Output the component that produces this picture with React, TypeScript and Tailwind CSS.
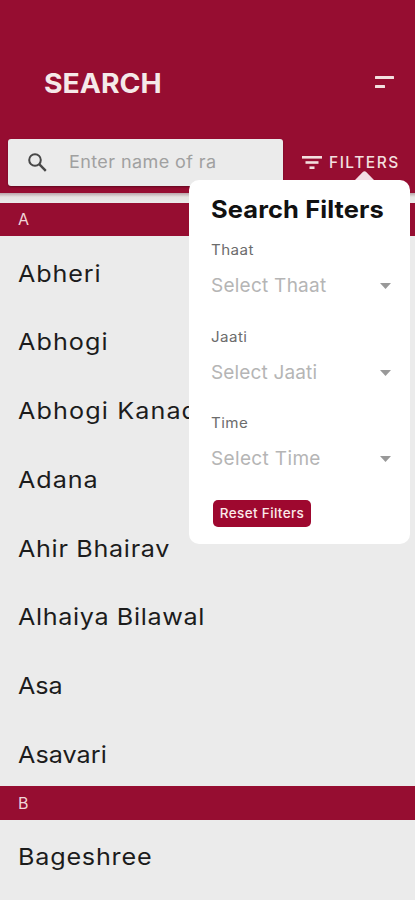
const sections = [
  {
    letter: 'A',
    ragas: [
      { name: 'Abheri', tracking: 'tracking-[0.8px]' },
      { name: 'Abhogi', tracking: 'tracking-[1px]' },
      { name: 'Abhogi Kanada', tracking: 'tracking-[1.05px]' },
      { name: 'Adana', tracking: 'tracking-[0.9px]' },
      { name: 'Ahir Bhairav', tracking: 'tracking-[0.65px]' },
      { name: 'Alhaiya Bilawal', tracking: 'tracking-[0.6px]' },
      { name: 'Asa', tracking: 'tracking-[-0.1px]' },
      { name: 'Asavari', tracking: 'tracking-[0.05px]' },
    ],
  },
  { letter: 'B', ragas: [{ name: 'Bageshree', tracking: 'tracking-[0.75px]' }] },
]

const filters = [
  { label: 'Thaat', placeholder: 'Select Thaat', tracking: 'tracking-[0.25px]' },
  { label: 'Jaati', placeholder: 'Select Jaati', tracking: 'tracking-[0.15px]' },
  { label: 'Time', placeholder: 'Select Time', tracking: 'tracking-[0.35px]' },
]

function Header() {
  return (
    <header className="h-[193px] bg-[#960d31]">
      <div className="flex h-[139px] items-start justify-between pl-[44px] pr-[21px] pt-[66px]">
        <h1 className="origin-left scale-x-[1.05] pt-px text-[27px] leading-[34px] font-bold tracking-[0px] text-[#f5e9e9]">SEARCH</h1>
        <svg className="mt-[10px]" width="19" height="13" viewBox="0 0 19 13" fill="#f3dfdf">
          <rect width="19" height="3" rx="0.5" />
          <rect y="9" width="10" height="3" rx="0.5" />
        </svg>
      </div>
      <div className="flex pl-[8px]">
        <div className="flex h-[47px] w-[275px] items-center rounded-[3px] bg-[#ebebeb] pl-[20px] shadow-[0_1px_2px_rgba(0,0,0,0.35)]">
          <svg width="19" height="19" viewBox="0 0 19 19" fill="none" stroke="#484848" strokeWidth="2">
            <circle cx="7" cy="7" r="5.8" />
            <path d="M11.2 11.2L17.8 17.8" strokeWidth="2.4" />
          </svg>
          <span className="ml-[22px] origin-left scale-x-[1.06] text-[17px] tracking-[0.37px] text-[#a0a0a0]">Enter name of ra</span>
        </div>
        <button className="flex h-[47px] items-center gap-[7px] pl-[19px] text-[15.5px] font-medium tracking-[1.5px] text-[#f3dfdf]">
          <svg width="20" height="13" viewBox="0 0 20 13" fill="#f3dfdf">
            <rect width="20" height="2.6" />
            <rect x="3.5" y="5.2" width="13" height="2.6" />
            <rect x="7.5" y="10.4" width="5" height="2.6" />
          </svg>
          FILTERS
        </button>
      </div>
    </header>
  )
}

function FilterPopup() {
  return (
    <div className="absolute left-[189px] top-[180px] h-[364px] w-[221px] rounded-[10px] bg-white pl-[22px]">
      <svg className="absolute left-[166px] top-[-9px]" width="19" height="9" viewBox="0 0 19 9">
        <path d="M0 9L7.8 1Q9.5 -0.5 11.2 1L19 9Z" fill="#f3dce4" />
      </svg>
      <h2 className="origin-left scale-x-[1.06] pt-[15px] text-[24px] leading-[30px] font-bold tracking-[0.1px] text-[#111]">Search Filters</h2>
      <div className="pt-[15px]">
        {filters.map((f) => (
          <div key={f.label} className="h-[86.5px]">
            <div className="origin-left scale-x-[1.08] text-[14px] leading-[20px] tracking-[0.4px] text-[#6c6c6c]">{f.label}</div>
            <div className="flex items-center justify-between pt-[12px] pr-[19px]">
              <span className={`text-[19px] leading-[28px] text-[#b5b5b5] ${f.tracking}`}>{f.placeholder}</span>
              <svg width="11" height="6" viewBox="0 0 11 6" fill="#999">
                <path d="M0 0H11L5.5 6Z" />
              </svg>
            </div>
          </div>
        ))}
      </div>
      <button className="ml-[2px] flex h-[27px] w-[98px] items-center justify-center rounded-[5px] bg-[#9e082f] pt-px text-[13.5px] font-medium tracking-[0.35px] text-[#fbeaea]">
        Reset Filters
      </button>
    </div>
  )
}

export default function App() {
  return (
    <div className="relative h-[900px] w-[415px] overflow-hidden bg-[#ebebeb] font-['Inter','Liberation_Sans',sans-serif] whitespace-nowrap">
      <Header />
      <div className="h-[9.5px] bg-gradient-to-b from-[#b9a5a9] via-[#e6e3e1] via-40% to-[#ebebeb]" />
      {sections.map((s) => (
        <section key={s.letter}>
          <div className="flex h-[33.7px] items-center bg-[#960d31] pl-[18px] text-[16px] text-[#f0d5d8]">{s.letter}</div>
          {s.ragas.map((r) => (
            <div key={r.name} className="flex h-[68.75px] items-center pl-[18px] pt-[5.5px] text-[23.5px] text-[#1c1c1c]">
              <span className={`origin-left scale-x-[1.07] ${r.tracking}`}>{r.name}</span>
            </div>
          ))}
        </section>
      ))}
      <FilterPopup />
    </div>
  )
}
